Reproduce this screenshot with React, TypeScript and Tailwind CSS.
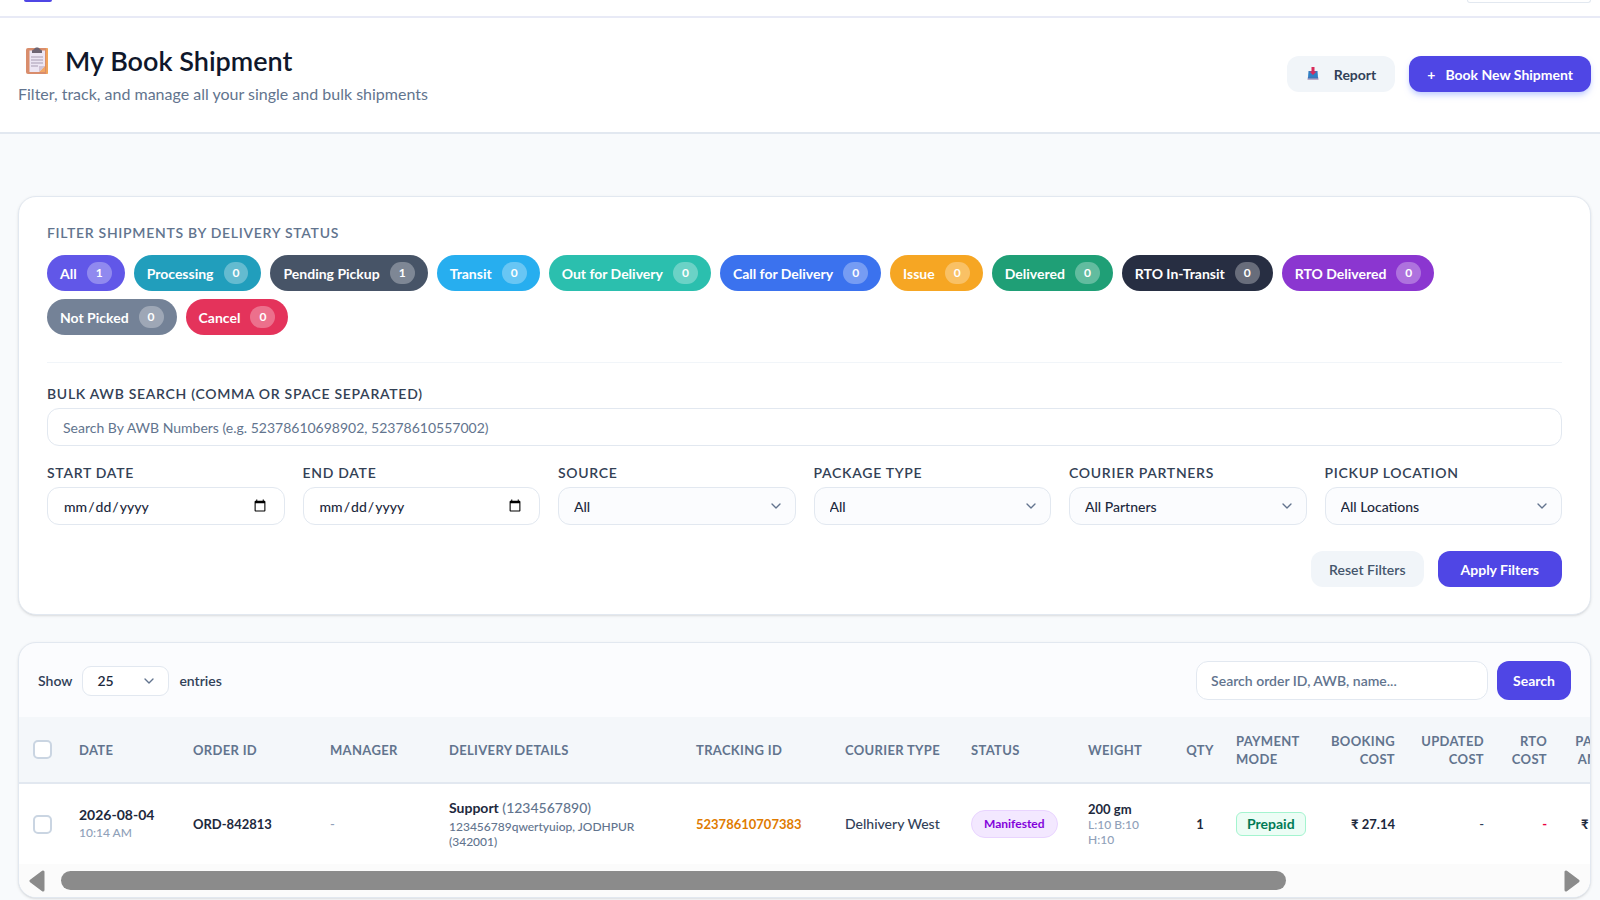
import { useId, useState } from "react";
import type { ReactNode } from "react";
import { ChevronDown } from "lucide-react";

const statuses = [
  { label: "All", count: 1, bg: "bg-[#6157e8]" },
  { label: "Processing", count: 0, bg: "bg-[#219ebc]" },
  { label: "Pending Pickup", count: 1, bg: "bg-[#475467]" },
  { label: "Transit", count: 0, bg: "bg-[#27aeef]" },
  { label: "Out for Delivery", count: 0, bg: "bg-[#2bbfae]" },
  { label: "Call for Delivery", count: 0, bg: "bg-[#3b72ee]" },
  { label: "Issue", count: 0, bg: "bg-[#f6a623]" },
  { label: "Delivered", count: 0, bg: "bg-[#1f9f76]" },
  { label: "RTO In-Transit", count: 0, bg: "bg-[#272e42]" },
  { label: "RTO Delivered", count: 0, bg: "bg-[#8b36d0]" },
  { label: "Not Picked", count: 0, bg: "bg-[#748297]" },
  { label: "Cancel", count: 0, bg: "bg-[#e4335b]" },
];

const columns = [
  { label: "Date", className: "w-[114px] px-3.5" },
  { label: "Order ID", className: "w-[137px] px-3.5" },
  { label: "Manager", className: "w-[119px] px-3.5" },
  { label: "Delivery Details", className: "w-[247px] px-3.5" },
  { label: "Tracking ID", className: "w-[149px] px-3.5" },
  { label: "Courier Type", className: "w-[126px] pl-3.5" },
  { label: "Status", className: "w-[117px] px-3.5" },
  { label: "Weight", className: "w-[104px] px-3.5" },
  { label: "Qty", className: "w-[44px] text-center" },
  { label: "Payment Mode", className: "w-[97px] pl-3.5" },
  { label: "Booking Cost", className: "w-[90px] pr-3.5 text-right" },
  { label: "Updated Cost", className: "w-[89px] pr-3.5 text-right" },
  { label: "RTO Cost", className: "w-[63px] pr-3.5 text-right" },
  { label: "Payment Amount", className: "w-[92px] pr-3.5 text-right" },
];

function ClipboardIcon() {
  return (
    <svg viewBox="0 0 24 28" className="h-7 w-6" aria-hidden="true">
      <rect x="1" y="1" width="22" height="26" rx="2" fill="#d98d6c" />
      <path d="M21 1h1a1 1 0 0 1 1 1v24a1 1 0 0 1-1 1h-1z" fill="#f0a45c" />
      <path d="M4.500 3.500h15.500v15.500l-5 6H4.500z" fill="#ece6f3" />
      <path d="M20 19v6h-6z" fill="#f2a766" />
      <path d="M14 25v-6h6z" fill="#cfc3d6" />
      <path d="M7 6V4c0-1 1-1.500 2-1.500C9.500 1 10.500.5 12 .5s2.500.5 3 2c1 0 2 .5 2 1.500v2z" fill="#6d6472" />
      <path d="M6 10h12M6 13h12M6 16h12M6 19h7" stroke="#a79cb2" strokeWidth="1" />
    </svg>
  );
}

function ReportIcon() {
  return (
    <svg viewBox="0 0 14 16" className="h-4 w-3.5" aria-hidden="true">
      <path d="M2.500 5h9l.5 6.500H2z" fill="#2f7fc4" />
      <path d="M1.500 11.500h11V14h-11z" fill="#b9acc9" />
      <path d="M2 11h10v1.500H2z" fill="#3d74b8" />
      <path d="M5.500 1h3v4.500h2L7 9 3.500 5.500h2z" fill="#d92b5b" />
    </svg>
  );
}

function Field({ label, children }: { label: string; children: (id: string) => ReactNode }) {
  const id = useId();
  return (
    <div className="flex min-w-0 flex-col gap-1">
      <label htmlFor={id} className="text-[14px] leading-5 font-semibold tracking-wider uppercase text-[#334155]">
        {label}
      </label>
      {children(id)}
    </div>
  );
}

function FilterSelect({ label, option }: { label: string; option: string }) {
  return (
    <Field label={label}>
      {(id) => (
        <div className="relative">
          <select id={id} className="h-[38px] w-full appearance-none rounded-xl border border-slate-200 bg-[#fbfcfe] pl-[15px] pr-10 text-[14px] font-medium text-slate-800">
            <option>{option}</option>
          </select>
          <ChevronDown className="pointer-events-none absolute right-3 top-[11px] h-4 w-4 text-slate-500" />
        </div>
      )}
    </Field>
  );
}

function DateField({ label }: { label: string }) {
  return (
    <Field label={label}>
      {(id) => (
        <input id={id} type="date" className="h-[38px] w-full rounded-xl border border-slate-200 bg-white px-[15px] text-[14px] font-medium text-slate-800" />
      )}
    </Field>
  );
}

function FilterCard() {
  return (
    <section className="rounded-[18px] border border-slate-200 bg-white px-7 pt-6 pb-[27px] shadow-sm">
      <h2 className="pt-0.5 text-[14px] leading-5 font-semibold tracking-wider uppercase text-slate-500">
        Filter shipments by delivery status
      </h2>
      <div className="mt-3 flex flex-wrap gap-x-[9px] gap-y-2">
        {statuses.map((s) => (
          <button key={s.label} className={`flex h-9 items-center gap-2.5 rounded-full px-[13px] text-[14px] font-bold text-white ${s.bg}`}>
            {s.label}
            <span className="flex h-[22px] items-center justify-center rounded-full bg-white/30 px-[9px] text-xs">{s.count}</span>
          </button>
        ))}
      </div>

      <form className="mt-[27px] border-t border-slate-100 pt-[21px]" onSubmit={(e) => e.preventDefault()}>
        <Field label="Bulk AWB search (comma or space separated)">
          {(id) => (
            <input
              id={id}
              type="text"
              placeholder="Search By AWB Numbers (e.g. 52378610698902, 52378610557002)"
              className="h-[38px] w-full rounded-xl border border-slate-200 px-[15px] text-[14px] placeholder:text-slate-500"
            />
          )}
        </Field>
        <div className="mt-[17px] grid grid-cols-2 gap-[18px] lg:grid-cols-6">
          <DateField label="Start date" />
          <DateField label="End date" />
          <FilterSelect label="Source" option="All" />
          <FilterSelect label="Package type" option="All" />
          <FilterSelect label="Courier partners" option="All Partners" />
          <FilterSelect label="Pickup location" option="All Locations" />
        </div>
        <div className="mt-[26px] flex justify-end gap-3.5">
          <button type="reset" className="h-9 rounded-xl bg-slate-100 px-[18px] text-[14px] font-semibold text-slate-600">Reset Filters</button>
          <button type="submit" className="h-9 rounded-xl bg-[#4f46e5] px-[23px] text-[14px] font-bold text-white">Apply Filters</button>
        </div>
      </form>
    </section>
  );
}

function Checkbox({ label }: { label: string }) {
  return (
    <input
      type="checkbox"
      aria-label={label}
      className="block h-[19px] w-[19px] appearance-none rounded-[5px] border-2 border-slate-300 bg-white checked:border-indigo-600 checked:bg-indigo-600"
    />
  );
}

function ShipmentTable() {
  return (
    <table className="w-[1634px] table-fixed text-left text-[13px] leading-[18px]">
      <thead>
        <tr className="h-[66px] border-b-2 border-slate-200 bg-[#f4f7fa] text-[13px] leading-[18px] tracking-wide uppercase text-slate-500">
          <th className="w-[46px] pl-3.5"><Checkbox label="Select all shipments" /></th>
          {columns.map((c) => (
            <th key={c.label} className={`font-bold ${c.className}`}>{c.label}</th>
          ))}
        </tr>
      </thead>
      <tbody>
        <tr className="h-[81px] bg-white font-medium text-slate-700">
          <td className="pl-3.5"><Checkbox label="Select ORD-842813" /></td>
          <td className="px-3.5">
            <div className="text-[14px] font-bold text-slate-800">2026-08-04</div>
            <div className="text-xs leading-[18px] text-slate-400">10:14 AM</div>
          </td>
          <td className="px-3.5 font-bold text-slate-800">ORD-842813</td>
          <td className="px-3.5 text-slate-400">-</td>
          <td className="px-3.5 text-slate-500">
            <div className="text-[14px]"><span className="font-bold text-slate-800">Support</span> (1234567890)</div>
            <div className="mt-0.5 text-xs leading-[15px]">123456789qwertyuiop, JODHPUR (342001)</div>
          </td>
          <td className="px-3.5"><a href="#tracking" className="font-bold text-[#e07b00]">52378610707383</a></td>
          <td className="px-3.5 text-[14px]">Delhivery West</td>
          <td className="px-3.5">
            <span className="inline-block rounded-full border border-purple-200 bg-purple-100 px-3 py-1 text-xs leading-[18px] font-bold text-purple-700">Manifested</span>
          </td>
          <td className="px-3.5">
            <div className="text-[13px] leading-[15px] font-bold text-slate-800">200 gm</div>
            <div className="text-xs leading-[15px] text-slate-400">L:10 B:10<br />H:10</div>
          </td>
          <td className="text-center font-bold text-slate-800">1</td>
          <td className="px-3.5">
            <span className="inline-block rounded-md border border-emerald-200 bg-emerald-50 px-2.5 py-px text-[14px] leading-5 font-bold text-emerald-700">Prepaid</span>
          </td>
          <td className="px-3.5 text-right font-bold text-slate-800">₹ 27.14</td>
          <td className="px-3.5 text-right">-</td>
          <td className="px-3.5 text-right font-bold text-rose-600">-</td>
          <td className="px-5 text-left font-bold text-slate-800">₹ 27.14</td>
        </tr>
      </tbody>
    </table>
  );
}

function ScrollBar() {
  return (
    <div className="flex h-[33px] items-center bg-[#fbfbfb] px-[9px]">
      <button aria-label="Scroll left">
        <svg viewBox="0 0 18 22" className="h-[22px] w-[18px]">
          <path d="M15 2v18L3 11z" fill="#8b8b8b" stroke="#8b8b8b" strokeWidth="3" strokeLinejoin="round" />
        </svg>
      </button>
      <div className="mx-[15px] flex-1">
        <div className="h-[19px] w-[82.4%] rounded-full bg-[#8b8b8b]" />
      </div>
      <button aria-label="Scroll right">
        <svg viewBox="0 0 18 22" className="h-[22px] w-[18px]">
          <path d="M3 2v18l12-9z" fill="#8b8b8b" stroke="#8b8b8b" strokeWidth="3" strokeLinejoin="round" />
        </svg>
      </button>
    </div>
  );
}

export default function App() {
  const [search, setSearch] = useState("");

  return (
    <div className="min-h-screen overflow-hidden bg-[#f8fafc] font-['Lato','Noto_Sans',sans-serif] text-slate-800">
      <nav className="flex h-[18px] items-start justify-between border-b-2 border-[#e8eaf6] bg-white pl-6 pr-[9px]">
        <div className="h-0.5 w-7 rounded-b-xl bg-[#4f46e5] shadow-md shadow-indigo-300" />
        <div className="h-[3px] w-[124px] rounded-b-lg border border-t-0 border-slate-200" />
      </nav>

      <header className="flex items-center justify-between border-b-2 border-slate-200 bg-white pt-[25px] pr-[9px] pb-[27px] pl-[18px]">
        <div>
          <h1 className="flex items-center gap-4 pl-[7px] text-[27px] leading-9 font-semibold text-slate-900">
            <ClipboardIcon />
            My Book Shipment
          </h1>
          <p className="mt-1 text-base leading-[22px] text-slate-500">Filter, track, and manage all your single and bulk shipments</p>
        </div>
        <div className="flex gap-3.5">
          <button className="flex h-9 items-center gap-3.5 rounded-xl bg-slate-100 px-[19px] text-[14px] font-bold text-slate-700">
            <ReportIcon />
            Report
          </button>
          <button className="flex h-9 items-center gap-2.5 rounded-xl bg-[#4f46e5] px-[18px] text-[14px] font-bold text-white shadow-md shadow-indigo-200">
            <span>+</span>
            Book New Shipment
          </button>
        </div>
      </header>

      <main className="flex flex-col gap-[27px] pt-[62px] pr-[9px] pl-[18px]">
        <FilterCard />

        <section className="overflow-hidden rounded-[18px] border border-slate-200 bg-[#fbfcfe] shadow-sm">
          <div className="flex items-center justify-between px-[19px] pt-[18px] pb-[17px] text-[14px] font-semibold text-slate-700">
            <label className="flex items-center gap-2.5">
              Show
              <span className="relative">
                <select className="h-[30px] w-[87px] appearance-none rounded-[9px] border border-slate-200 bg-white pl-3.5 text-[14px] font-semibold text-slate-800">
                  <option>25</option>
                </select>
                <ChevronDown className="pointer-events-none absolute top-[7px] right-3 h-4 w-4 text-slate-500" />
              </span>
              entries
            </label>
            <form className="flex gap-[9px]" onSubmit={(e) => e.preventDefault()}>
              <input
                type="search"
                aria-label="Search shipments"
                value={search}
                onChange={(e) => setSearch(e.target.value)}
                placeholder="Search order ID, AWB, name..."
                className="h-[39px] w-[292px] rounded-xl border border-slate-200 bg-white px-3.5 text-[14px] placeholder:text-slate-500"
              />
              <button type="submit" className="h-[39px] rounded-xl bg-[#4f46e5] px-4 text-[14px] font-bold text-white">Search</button>
            </form>
          </div>
          <div className="overflow-hidden">
            <ShipmentTable />
          </div>
          <ScrollBar />
        </section>
      </main>
    </div>
  );
}
